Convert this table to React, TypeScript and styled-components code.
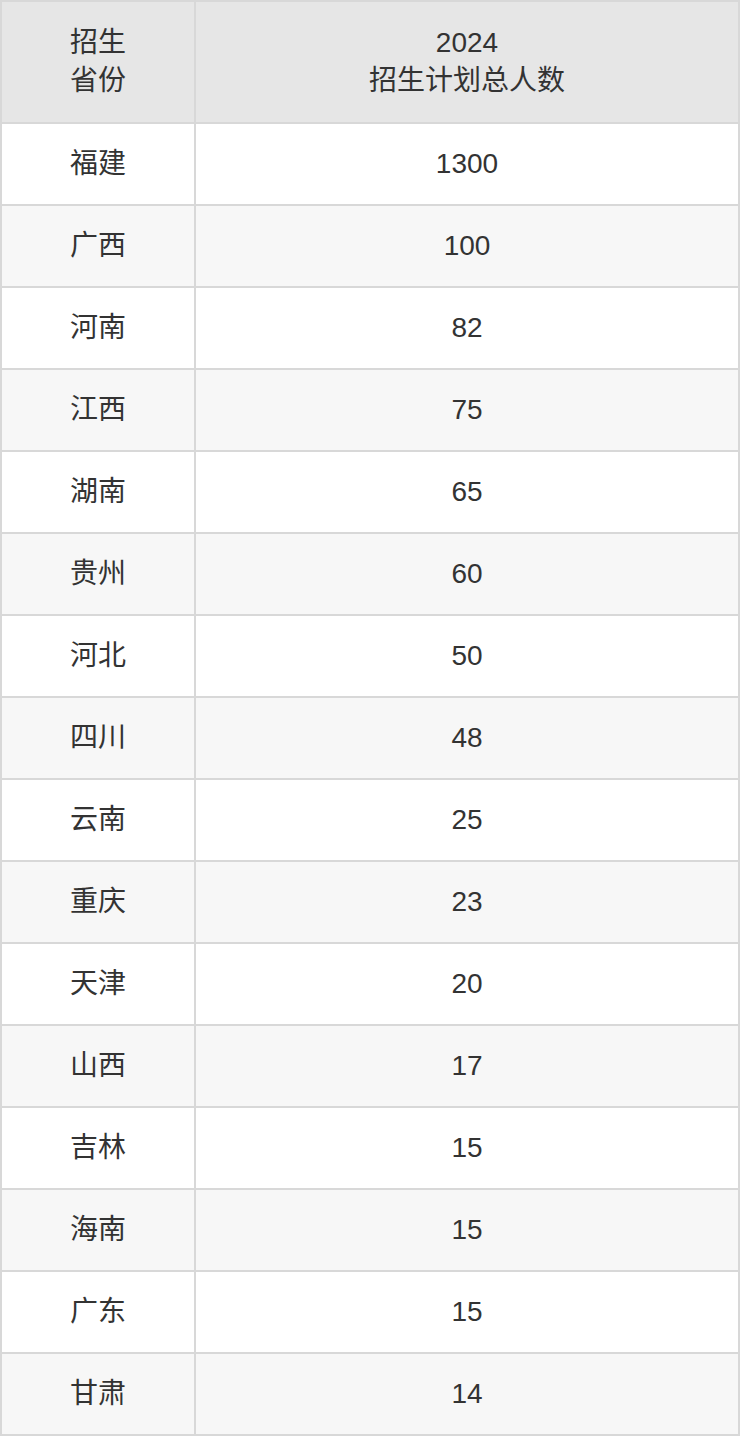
import React from "react";
import styled, { createGlobalStyle } from "styled-components";

const Global = createGlobalStyle`
  html, body { margin: 0; padding: 0; background: #ffffff; }
  body { font-family: "Liberation Sans", Arial, "Noto Sans CJK SC", sans-serif; }
`;

const Table = styled.div`
  display: grid;
  grid-template-columns: 192px 1fr;
  grid-template-rows: 120px;
  grid-auto-rows: 80px;
  gap: 2px;
  padding: 2px;
  width: 740px;
  box-sizing: border-box;
  background: #d8d8d8;
`;

const Cell = styled.div<{ $header?: boolean; $alt?: boolean }>`
  display: flex;
  align-items: center;
  justify-content: center;
  text-align: center;
  background: ${(p) => (p.$header ? "#e6e6e6" : p.$alt ? "#f7f7f7" : "#ffffff")};
  color: #333333;
  font-family: "Liberation Sans", Arial, "Noto Sans CJK SC", sans-serif;
  font-size: 28px;
  line-height: 38px;
`;

const rows: [string, number][] = [
  ["福建", 1300],
  ["广西", 100],
  ["河南", 82],
  ["江西", 75],
  ["湖南", 65],
  ["贵州", 60],
  ["河北", 50],
  ["四川", 48],
  ["云南", 25],
  ["重庆", 23],
  ["天津", 20],
  ["山西", 17],
  ["吉林", 15],
  ["海南", 15],
  ["广东", 15],
  ["甘肃", 14],
];

export default function App() {
  return (
    <>
      <Global />
      <Table>
        <Cell $header>
          招生
          <br />
          省份
        </Cell>
        <Cell $header>
          2024
          <br />
          招生计划总人数
        </Cell>
        {rows.map(([name, n], i) => (
          <React.Fragment key={name + i}>
            <Cell $alt={i % 2 === 1}>{name}</Cell>
            <Cell $alt={i % 2 === 1}>{n}</Cell>
          </React.Fragment>
        ))}
      </Table>
    </>
  );
}
